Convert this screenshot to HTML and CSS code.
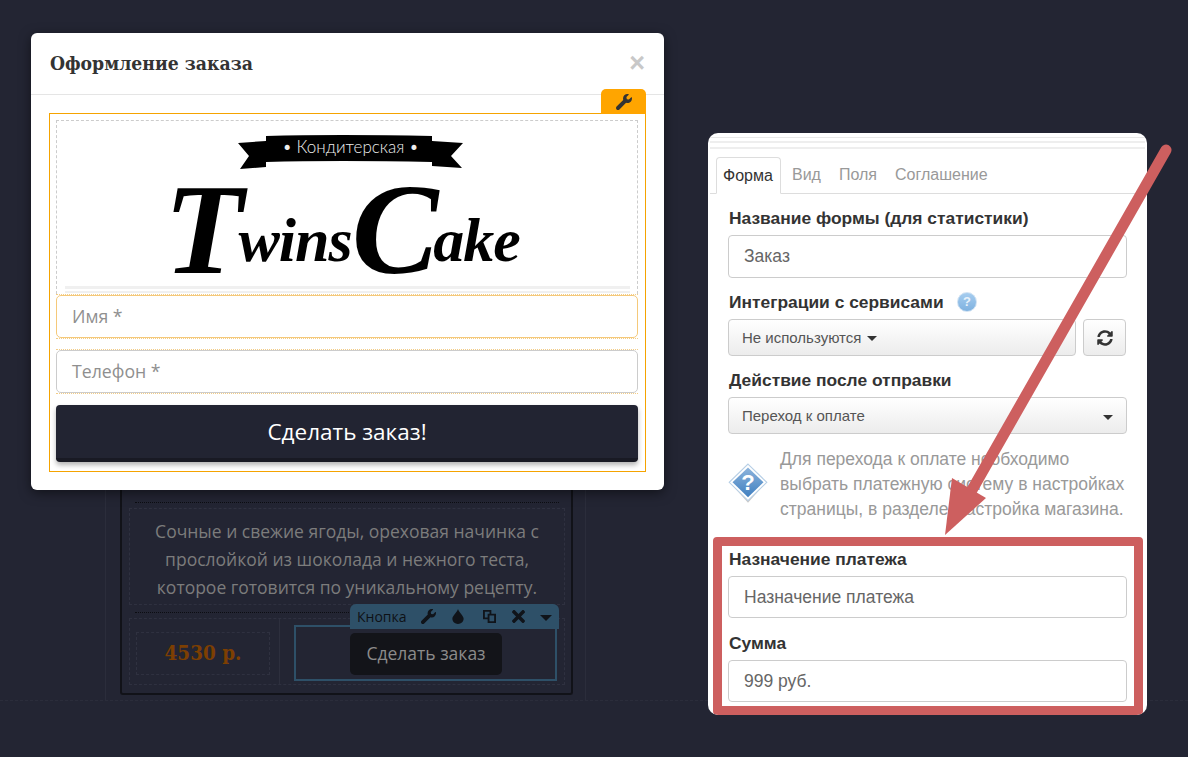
FILE: index.html
```html
<!DOCTYPE html>
<html lang="en">
<head>
    <meta charset="UTF-8">
    <meta name="viewport" content="width=device-width, initial-scale=1.0">
    <title>Оформление заказа</title>
    <link rel="stylesheet" href="styles.css">
</head>
<body>
    <div class="page">
        <!-- Dimmed editor behind the windows -->
        <div class="editor">
            <div class="guides">
                <div class="product-card">
                    <div class="dotted-line"></div>
                    <div class="product-text">
                        Сочные и свежие ягоды, ореховая начинка с<br>
                        прослойкой из шоколада и нежного теста,<br>
                        которое готовится по уникальному рецепту.
                    </div>
                    <div class="dotted-line"></div>
                    <div class="product-row">
                        <div class="price-col">
                            <div class="price">4530 р.</div>
                        </div>
                        <div class="button-col">
                            <div class="toolbar">
                                <span class="toolbar-name">Кнопка</span>
                                <svg class="tool wrench" viewBox="0 0 512 512"><path d="M507.73 109.1c-2.24-9.03-13.54-12.09-20.12-5.51l-74.36 74.36-67.88-11.31-11.31-67.88 74.36-74.36c6.62-6.62 3.43-17.9-5.66-20.16-47.38-11.74-99.55.91-136.58 37.93-39.64 39.64-50.55 97.1-34.05 147.2L18.74 402.76c-24.99 24.99-24.99 65.51 0 90.5 24.99 24.99 65.51 24.99 90.5 0l213.21-213.21c50.12 16.71 107.47 5.68 147.37-34.22 37.07-37.07 49.7-89.32 37.91-136.73z"/></svg>
                                <svg class="tool drop" viewBox="0 0 12 16"><path d="M6 0C5 3.500 0 7 0 10.500 0 13.600 2.700 16 6 16s6-2.400 6-5.500C12 7 7 3.500 6 0z"/></svg>
                                <svg class="tool copy" viewBox="0 0 14 14"><path d="M0 0h9v4h5v10H5v-4H0zM2 2v6h3V4h2V2zM7 6v6h5V6z" fill-rule="evenodd"/></svg>
                                <svg class="tool times" viewBox="0 90 352 332"><path d="M242.72 256l100.07-100.07c12.28-12.28 12.28-32.19 0-44.48l-22.24-22.24c-12.28-12.28-32.19-12.280-44.480 0L176 189.280 75.930 89.210c-12.280-12.280-32.190-12.280-44.480 0L9.210 111.450c-12.280 12.280-12.280 32.190 0 44.480L109.280 256 9.210 356.070c-12.280 12.280-12.280 32.190 0 44.480l22.240 22.240c12.280 12.280 32.200 12.280 44.480 0L176 322.720l100.070 100.070c12.280 12.280 32.200 12.280 44.480 0l22.240-22.240c12.280-12.280 12.280-32.190 0-44.480L242.720 256z"/></svg>
                                <span class="tool-caret"></span>
                            </div>
                            <div class="dark-btn">Сделать заказ</div>
                        </div>
                    </div>
                </div>
            </div>
            <div class="guide-bottom"></div>
        </div>

        <!-- Order popup -->
        <div class="modal">
            <div class="modal-head">
                <h2>Оформление заказа</h2>
                <span class="modal-close">&times;</span>
            </div>
            <div class="modal-body">
                <div class="form-frame">
                    <div class="frame-tab">
                        <svg class="frame-wrench" viewBox="0 0 512 512"><path d="M507.73 109.1c-2.24-9.03-13.54-12.09-20.12-5.51l-74.36 74.36-67.88-11.31-11.31-67.88 74.36-74.36c6.62-6.62 3.43-17.9-5.66-20.16-47.38-11.74-99.55.91-136.58 37.93-39.64 39.64-50.55 97.1-34.05 147.2L18.74 402.76c-24.99 24.99-24.99 65.51 0 90.5 24.99 24.99 65.51 24.99 90.5 0l213.21-213.21c50.12 16.71 107.47 5.68 147.37-34.22 37.07-37.07 49.7-89.32 37.91-136.73z"/></svg>
                    </div>
                    <div class="logo-box">
                        <div class="ribbon">
                            <svg class="ribbon-bg" viewBox="0 0 225 34"><path d="M0 8L28 6V1Q99-1 194 1V6L225 8 213 21 224 33 194 31V27Q99 25 28 27V32L2 34 11 21z"/></svg>
                            <span class="ribbon-text">• Кондитерская •</span>
                        </div>
                        <div class="logo-word"><span class="logo-cap">T</span>wins<span class="logo-cap">C</span>ake</div>
                        <div class="logo-lines"></div>
                    </div>
                    <div class="order-field"><div class="order-input focused">Имя *</div></div>
                    <div class="order-field"><div class="order-input">Телефон *</div></div>
                    <div class="order-btn">Сделать заказ!</div>
                </div>
            </div>
        </div>

        <!-- Settings window -->
        <div class="panel">
            <div class="panel-lines"></div>
            <div class="tabs">
                <span class="tab active">Форма</span>
                <span class="tab">Вид</span>
                <span class="tab">Поля</span>
                <span class="tab">Соглашение</span>
            </div>
            <div class="panel-form">
                <label class="label">Название формы (для статистики)</label>
                <div class="input">Заказ</div>

                <label class="label label-help">Интеграции с сервисами
                    <span class="help">?</span>
                </label>
                <div class="select-row">
                    <div class="select select-grow">Не используются <span class="caret"></span></div>
                    <div class="select refresh">
                        <svg viewBox="0 0 512 512"><path d="M370.72 133.28C339.458 104.008 298.888 87.962 255.848 88c-77.458.068-144.328 53.178-162.791 126.85-1.344 5.363-6.122 9.15-11.651 9.15H24.103c-7.498 0-13.194-6.807-11.807-14.176C33.933 94.924 134.813 8 256 8c66.448 0 126.791 26.136 171.315 68.685L463.03 40.97C478.149 25.851 504 36.559 504 57.941V192c0 13.255-10.745 24-24 24H345.941c-21.382 0-32.09-25.851-16.971-40.971l41.75-41.749zM32 296h134.059c21.382 0 32.09 25.851 16.971 40.971l-41.75 41.75c31.262 29.273 71.835 45.319 114.876 45.28 77.418-.07 144.315-53.144 162.787-126.849 1.344-5.363 6.122-9.15 11.651-9.15h57.304c7.498 0 13.194 6.807 11.807 14.176C478.067 417.076 377.187 504 256 504c-66.448 0-126.791-26.136-171.315-68.685L48.97 471.03C33.851 486.149 8 475.441 8 454.059V320c0-13.255 10.745-24 24-24z"/></svg>
                    </div>
                </div>

                <label class="label">Действие после отправки</label>
                <div class="select select-wide">Переход к оплате <span class="caret"></span></div>

                <div class="notice">
                    <svg class="notice-icon" viewBox="0 0 36 38">
                        <defs>
                            <linearGradient id="dia" x1="0" y1="0" x2="0" y2="1">
                                <stop offset="0" stop-color="#8db4dc"/>
                                <stop offset="1" stop-color="#3f7fc0"/>
                            </linearGradient>
                        </defs>
                        <path d="M18 3L34 18 18 36 2 18z" fill="#c9c9c9"/>
                        <path d="M18 1L35 17.500 18 34 1 17.500z" fill="#fff" stroke="#b7cfe6"/>
                        <path d="M18 4L32 17.500 18 31 4 17.500z" fill="url(#dia)"/>
                        <text x="18" y="24" class="notice-mark">?</text>
                    </svg>
                    <p>Для перехода к оплате необходимо выбрать платежную систему в настройках страницы, в разделе Настройка магазина.</p>
                </div>

                <div class="payment">
                    <label class="label">Назначение платежа</label>
                    <div class="input">Назначение платежа</div>
                    <label class="label">Сумма</label>
                    <div class="input">999 руб.</div>
                </div>
            </div>
            <div class="red-box"></div>
        </div>

        <svg class="arrow" viewBox="0 0 1188 757">
            <line x1="1166" y1="150" x2="968" y2="497" class="arrow-line"/>
            <path d="M945 535L952 478 986 498z" class="arrow-head"/>
        </svg>
    </div>
</body>
</html>
```

FILE: styles.css
```css
* {
    margin: 0;
    padding: 0;
    box-sizing: border-box;
}

:root {
    --page-bg: #232533;
    --red: #cd5f5f;
    --teal: #2e5068;
    --orange: #f5a300;
}

body {
    background-color: var(--page-bg);
    font-family: 'Liberation Sans', Arial, sans-serif;
}

.page {
    position: relative;
    width: 1188px;
    height: 757px;
    overflow: hidden;
}

/* editor behind */
.editor {
    padding-top: 470px;
}

.guides {
    width: 481px;
    height: 230px;
    margin-left: 105px;
    padding: 0 10px;
    border-left: 1px solid #2b2d3b;
    border-right: 1px solid #2b2d3b;
}

.product-card {
    width: 453px;
    height: 225px;
    margin-left: 4px;
    padding: 32px 6px 0 7px;
    border: 2px solid #111218;
    border-top: 0;
    border-radius: 3px;
}

.dotted-line {
    height: 1px;
    margin: 0 6px;
    border-top: 1px dotted #0c0d12;
}

.product-text {
    height: 97px;
    margin-top: 5px;
    padding-top: 8px;
    border: 1px dashed #2f3140;
    font-family: 'Open Sans', sans-serif;
    font-size: 17.5px;
    line-height: 28px;
    text-align: center;
    color: #7c7c7c;
}

.product-text + .dotted-line {
    margin-top: 7px;
}

.product-row {
    display: flex;
    height: 67px;
    margin-top: 5px;
    border: 1px dashed #2f3140;
}

.price-col {
    width: 150px;
    padding: 13px 0 0 6px;
    border-right: 1px solid #2d2f3d;
}

.price {
    height: 43px;
    width: 134px;
    border: 1px dashed #2f3140;
    font-family: 'DejaVu Serif', serif;
    font-stretch: condensed;
    font-weight: bold;
    font-size: 20.5px;
    line-height: 41px;
    text-align: center;
    color: #7d3f02;
}

.button-col {
    position: relative;
    width: 263px;
    height: 56px;
    margin: 6px 0 0 14px;
    padding: 6px 0 0 54px;
    border: 2px solid var(--teal);
}

.toolbar {
    position: absolute;
    left: 54px;
    top: -23px;
    display: flex;
    align-items: center;
    width: 209px;
    height: 25px;
    padding-left: 7px;
    background: var(--teal);
    border-radius: 6px 6px 0 0;
    font-size: 14px;
    color: #0e1116;
}

.toolbar-name {
    font-family: 'Open Sans', sans-serif;
    font-size: 14px;
    width: 64px;
}

.tool {
    display: block;
    height: 15px;
    fill: #10141a;
}

.wrench {
    width: 15px;
}

.drop {
    width: 12px;
    margin-left: 16px;
}

.copy {
    width: 13px;
    height: 13px;
    margin-left: 19px;
}

.times {
    width: 13px;
    height: 13px;
    margin-left: 16px;
}

.tool-caret {
    width: 0;
    height: 0;
    margin-left: 15px;
    margin-top: 3px;
    border-top: 6px solid #10141a;
    border-left: 6px solid transparent;
    border-right: 6px solid transparent;
}

.dark-btn {
    width: 152px;
    height: 42px;
    background: #131419;
    border-radius: 5px;
    font-family: 'Open Sans', sans-serif;
    font-size: 17.5px;
    line-height: 40px;
    text-align: center;
    color: #8b8b8b;
}

.guide-bottom {
    margin-top: 0;
    border-top: 1px dashed #2b2d3b;
}

/* popup */
.modal {
    position: absolute;
    left: 31px;
    top: 33px;
    width: 633px;
    height: 457px;
    background: #fff;
    border-radius: 6px;
    box-shadow: 0 3px 12px rgba(0, 0, 0, 0.5);
}

.modal-head {
    position: relative;
    height: 62px;
    padding: 19px 0 0 19px;
    border-bottom: 1px solid #e5e5e5;
}

.modal-head h2 {
    font-family: 'DejaVu Serif', serif;
    font-stretch: condensed;
    font-size: 19.2px;
    font-weight: bold;
    line-height: 24px;
    color: #333;
}

.modal-close {
    position: absolute;
    right: 19px;
    top: 14px;
    font-family: 'Liberation Sans', sans-serif;
    font-size: 27px;
    font-weight: bold;
    line-height: 32px;
    color: #c8c8c8;
}

.modal-body {
    padding: 18px 18px 0;
}

.form-frame {
    position: relative;
    height: 359px;
    padding: 6px 7px 0 6px;
    border: 1px solid var(--orange);
}

.frame-tab {
    position: absolute;
    right: -1px;
    top: -25px;
    width: 45px;
    height: 25px;
    padding: 5px 0 0 15px;
    background: #ffa500;
    border-radius: 5px 5px 0 0;
}

.frame-wrench {
    display: block;
    width: 16px;
    height: 16px;
    fill: #333;
}

.logo-box {
    position: relative;
    height: 174px;
    border: 1px dashed #ccc;
    border-bottom: 0;
}

.ribbon {
    position: absolute;
    left: 181px;
    top: 14px;
    width: 225px;
    height: 34px;
}

.ribbon-bg {
    display: block;
    width: 225px;
    height: 34px;
    fill: #000;
}

.ribbon-text {
    position: absolute;
    left: 0;
    right: 0;
    top: 2px;
    font-family: 'Lato', sans-serif;
    font-weight: 300;
    font-size: 17px;
    line-height: 20px;
    text-align: center;
    color: #eee;
}

.logo-word {
    position: absolute;
    left: 107px;
    top: 58px;
    font-family: 'Liberation Serif', serif;
    font-style: italic;
    font-weight: bold;
    font-size: 62px;
    line-height: 110px;
    letter-spacing: -1px;
    white-space: nowrap;
    color: #000;
}

.logo-cap {
    font-size: 130px;
    letter-spacing: -5px;
    line-height: 100px;
    vertical-align: -12px;
}

.logo-lines {
    position: absolute;
    left: 8px;
    right: 7px;
    top: 165px;
    height: 7px;
    border-top: 3px solid #f0f0f0;
    border-bottom: 2px solid #f0f0f0;
}

.order-field {
    height: 45px;
    margin-bottom: 10px;
    border-top: 1px dotted #f3cd87;
    border-bottom: 1px dotted #f3cd87;
}

.order-input {
    height: 43px;
    padding-left: 15px;
    background: #fff;
    border: 1px solid #ccc;
    border-radius: 5px;
    font-family: 'Open Sans', sans-serif;
    font-size: 17.7px;
    line-height: 41px;
    color: #8f8f8f;
}

.order-input.focused {
    border-color: #f5c97a;
}

.order-btn {
    height: 57px;
    margin-top: 11px;
    background: #222432;
    border-bottom: 4px solid #191a24;
    border-radius: 4px;
    box-shadow: 0 3px 5px rgba(0, 0, 0, 0.3);
    font-family: 'Open Sans', sans-serif;
    font-size: 22.5px;
    line-height: 53px;
    text-align: center;
    color: #fff;
}

/* settings window */
.panel {
    position: absolute;
    left: 708px;
    top: 133px;
    width: 439px;
    height: 582px;
    background: #fff;
    border-radius: 10px;
    overflow: hidden;
}

.panel-lines {
    height: 12px;
    margin: 4px 2px 0;
    border-top: 1px solid #e8e8e8;
    border-bottom: 2px solid #eee;
    background: linear-gradient(#fff 3px, #eee 3px, #eee 5px, #fff 5px);
}

.tabs {
    display: flex;
    height: 37px;
    margin: 8px 7px 0 2px;
    padding-left: 6px;
    border-bottom: 1px solid #ddd;
    font-size: 16px;
    line-height: 36px;
}

.tab {
    height: 37px;
    padding: 0 7px;
    margin-right: 4px;
    color: #999;
}

.tab.active {
    width: 65px;
    padding: 0 6px;
    background: #fff;
    border: 1px solid #ddd;
    border-bottom-color: #fff;
    border-radius: 4px 4px 0 0;
    color: #333;
    line-height: 35px;
}

.panel-form {
    padding: 14px 20px 0;
}

.label {
    display: block;
    height: 20px;
    margin-bottom: 7px;
    padding-left: 1px;
    font-size: 17.4px;
    font-weight: bold;
    line-height: 20px;
    color: #333;
}

.label-help {
    position: relative;
    margin-bottom: 7px;
}

.help {
    position: absolute;
    left: 229px;
    top: 0;
    width: 20px;
    height: 20px;
    border-radius: 50%;
    background: linear-gradient(#a6cdef, #7fb2e0);
    border: 1px solid #d0e2f3;
    font-size: 13px;
    line-height: 18px;
    text-align: center;
    color: #e8f2fb;
}

.input {
    height: 43px;
    margin-bottom: 14px;
    padding-left: 15px;
    border: 1px solid #ccc;
    border-radius: 4px;
    font-size: 17.5px;
    line-height: 41px;
    color: #666;
}

.select-row {
    display: flex;
    gap: 7px;
    margin-bottom: 14px;
}

.select {
    position: relative;
    height: 37px;
    padding-left: 13px;
    background: linear-gradient(#fff, #ececec);
    border: 1px solid #ccc;
    border-radius: 4px;
    font-size: 15px;
    line-height: 35px;
    color: #555;
}

.select-grow {
    width: 348px;
}

.refresh {
    display: flex;
    align-items: center;
    justify-content: center;
    width: 43px;
    padding: 0;
}

.refresh svg {
    display: block;
    width: 16px;
    height: 16px;
    fill: #333;
}

.caret {
    display: inline-block;
    width: 0;
    height: 0;
    margin-left: 1px;
    vertical-align: 2px;
    border-top: 5px solid #333;
    border-left: 5px solid transparent;
    border-right: 5px solid transparent;
}

.select-wide {
    margin-bottom: 11px;
}

.select-wide .caret {
    position: absolute;
    right: 13px;
    top: 17px;
}

.notice {
    display: flex;
    align-items: center;
    height: 78px;
}

.notice-icon {
    display: block;
    flex: none;
    width: 40px;
    height: 42px;
    margin-right: 12px;
}

.notice-mark {
    font-family: 'Liberation Sans', sans-serif;
    font-size: 20px;
    font-weight: bold;
    text-anchor: middle;
    fill: #fff;
}

.notice p {
    width: 348px;
    font-size: 17.5px;
    line-height: 25px;
    color: #999;
}

.payment {
    margin-top: 26px;
}

.payment .input {
    height: 42px;
    margin-bottom: 15px;
}

.red-box {
    position: absolute;
    left: 5px;
    top: 404px;
    width: 430px;
    height: 178px;
    border: 9px solid var(--red);
    border-radius: 4px;
}

/* pointer */
.arrow {
    position: absolute;
    left: 0;
    top: 0;
    width: 1188px;
    height: 757px;
}

.arrow-line {
    stroke: var(--red);
    stroke-width: 11;
    stroke-linecap: round;
}

.arrow-head {
    fill: var(--red);
}
```
